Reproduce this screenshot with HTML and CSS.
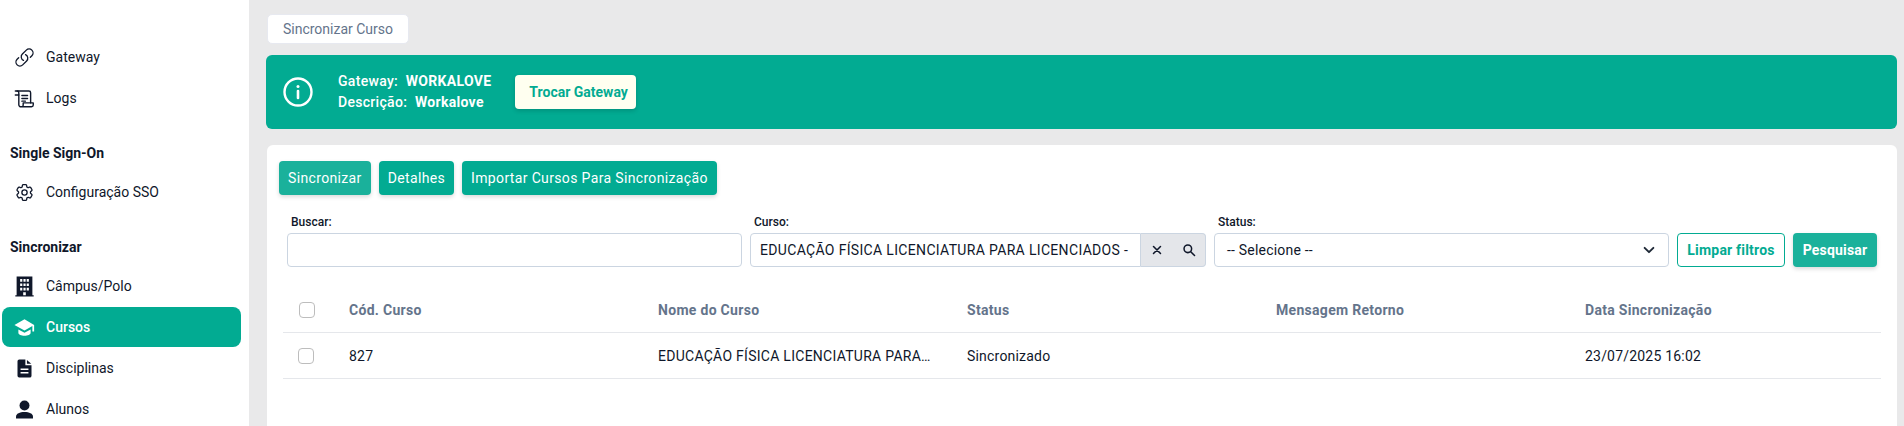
FILE: index.html
```html
<!DOCTYPE html>
<html lang="pt-BR">
<head>
  <meta charset="UTF-8">
  <title>Sincronizar Curso</title>
  <link rel="stylesheet" href="styles.css">
</head>
<body>
  <aside class="sidebar">
    <a class="nav-item">
      <svg class="nav-icon" viewBox="0 0 24 24" fill="none" stroke="currentColor" stroke-width="1.5" stroke-linecap="round" stroke-linejoin="round"><path d="M13.19 8.688a4.5 4.5 0 0 1 1.242 7.244l-4.5 4.5a4.5 4.5 0 0 1-6.364-6.364l1.757-1.757m13.35-.622 1.757-1.757a4.5 4.5 0 0 0-6.364-6.364l-4.5 4.5a4.5 4.5 0 0 0 1.242 7.244"/></svg>
      Gateway
    </a>
    <a class="nav-item">
      <svg class="nav-icon" viewBox="0 0 24 24" fill="none" stroke="currentColor" stroke-width="1.6" stroke-linecap="round" stroke-linejoin="round"><path d="M1.500 3.500H17a2 2 0 0 1 2 2V17"/><path d="M3.500 3.500a2 2 0 0 1 2 2v2.500h-4"/><path d="M5.500 8v11a2.500 2.500 0 0 0 2.500 2.500h12a2 2 0 0 0 2-2V17H10.500v2.500a2 2 0 0 1-2.500 2"/><path d="M9 8.500h6.500M9 12h6.500M9 15h4"/></svg>
      Logs
    </a>
    <h4 class="nav-title">Single Sign-On</h4>
    <a class="nav-item">
      <svg class="nav-icon" viewBox="0 0 24 24" fill="none" stroke="currentColor" stroke-width="1.5" stroke-linecap="round" stroke-linejoin="round"><path d="M9.594 3.940c.09-.542.56-.94 1.110-.94h2.593c.55 0 1.020.398 1.110.94l.213 1.281c.063.374.313.686.645.870.074.040.147.083.220.127.325.196.72.257 1.075.124l1.217-.456a1.125 1.125 0 0 1 1.370.49l1.296 2.247a1.125 1.125 0 0 1-.26 1.431l-1.003.827c-.293.241-.438.613-.43.992a7.723 7.723 0 0 1 0 .255c-.008.378.137.75.43.991l1.004.827c.424.35.534.955.26 1.430l-1.298 2.247a1.125 1.125 0 0 1-1.369.491l-1.217-.456c-.355-.133-.75-.072-1.076.124a6.470 6.470 0 0 1-.22.128c-.331.183-.581.495-.644.869l-.213 1.281c-.09.543-.56.94-1.110.94h-2.594c-.55 0-1.019-.398-1.110-.94l-.213-1.281c-.062-.374-.312-.686-.644-.87a6.520 6.520 0 0 1-.22-.127c-.325-.196-.72-.257-1.076-.124l-1.217.456a1.125 1.125 0 0 1-1.369-.49l-1.297-2.247a1.125 1.125 0 0 1 .26-1.431l1.004-.827c.292-.24.437-.613.43-.991a6.932 6.932 0 0 1 0-.255c.007-.38-.138-.751-.43-.992l-1.004-.827a1.125 1.125 0 0 1-.26-1.430l1.297-2.247a1.125 1.125 0 0 1 1.370-.491l1.216.456c.356.133.751.072 1.076-.124.072-.044.146-.086.22-.128.332-.183.582-.495.644-.869l.214-1.280Z"/><path d="M15 12a3 3 0 1 1-6 0 3 3 0 0 1 6 0Z"/></svg>
      Configuração SSO
    </a>
    <h4 class="nav-title">Sincronizar</h4>
    <a class="nav-item">
      <svg class="nav-icon" viewBox="0 0 24 24" fill="currentColor"><path fill-rule="evenodd" d="M3 .5h18v21.500h1.500v1.500h-21V22H3zM7 3.500v3h2.500v-3zm3.800 0v3h2.500v-3zm3.700 0v3H17v-3zM7 8.500v3h2.500v-3zm3.800 0v3h2.500v-3zm3.700 0v3H17v-3zM7 13.500v3h2.500v-3zm3.800 0v3h2.500v-3zm3.700 0v3H17v-3zM10.500 18.500V22h3v-3.500z"/></svg>
      Câmpus/Polo
    </a>
    <a class="nav-item active">
      <svg class="nav-icon" viewBox="0 0 24 24" fill="currentColor"><path d="M12 2.500.5 9 12 15.500 21 10.400V16.500h2V9z"/><path d="M5 14.200V18c0 2 3.200 3.500 7 3.500s7-1.500 7-3.500v-3.800l-7 3.900z"/></svg>
      Cursos
    </a>
    <a class="nav-item">
      <svg class="nav-icon" viewBox="0 0 24 24" fill="currentColor"><path fill-rule="evenodd" d="M6 1.700h7v6.500h7v12a2.100 2.100 0 0 1-2.100 2.100H6a2.100 2.100 0 0 1-2-2.100V3.800a2.100 2.100 0 0 1 2-2.100zM7.500 12v1.800h9V12zm0 4v1.800h9V16z"/><path d="M14.800 2.200 19.700 6.600h-4.900z"/></svg>
      Disciplinas
    </a>
    <a class="nav-item">
      <svg class="nav-icon" viewBox="0 0 24 24" fill="currentColor"><circle cx="12" cy="7.400" r="5.700"/><path d="M2.300 22.300v-2c0-3.600 4.300-5.400 9.700-5.400s9.700 1.800 9.700 5.400v2z"/></svg>
      Alunos
    </a>
  </aside>

  <main class="content">
    <div class="breadcrumb">Sincronizar Curso</div>

    <section class="alert">
      <svg class="alert-icon" viewBox="0 0 30 30" fill="none" stroke="currentColor" stroke-width="2.400"><circle cx="15" cy="15" r="13.500"/><path d="M15 14v7" stroke-linecap="round" stroke-width="2.600"/><circle cx="15" cy="9.500" r="1.500" fill="currentColor" stroke="none"/></svg>
      <div class="alert-text">
        <div>Gateway: <b>WORKALOVE</b></div>
        <div>Descrição: <b>Workalove</b></div>
      </div>
      <button class="btn-light">Trocar Gateway</button>
    </section>

    <section class="card">
      <div class="actions">
        <button class="btn btn-soft">Sincronizar</button>
        <button class="btn">Detalhes</button>
        <button class="btn">Importar Cursos Para Sincronização</button>
      </div>

      <div class="filters">
        <div class="field field-search">
          <label>Buscar:</label>
          <input class="input" type="text">
        </div>
        <div class="field field-course">
          <label>Curso:</label>
          <div class="input-group">
            <div class="input-value">EDUCAÇÃO FÍSICA LICENCIATURA PARA LICENCIADOS -</div>
            <div class="input-addon">
              <svg viewBox="0 0 24 24" fill="none" stroke="currentColor" stroke-width="2.600" stroke-linecap="round"><path d="M6 6l12 12M18 6 6 18"/></svg>
              <svg viewBox="0 0 24 24" fill="none" stroke="currentColor" stroke-width="2.600" stroke-linecap="round"><circle cx="10" cy="10" r="6.500"/><path d="m15 15 6.500 6.500"/></svg>
            </div>
          </div>
        </div>
        <div class="field field-status">
          <label>Status:</label>
          <div class="select">
            <span>-- Selecione --</span>
            <svg viewBox="0 0 16 16" fill="none" stroke="currentColor" stroke-width="2.200" stroke-linecap="round" stroke-linejoin="round"><path d="m3 5.500 5 5 5-5"/></svg>
          </div>
        </div>
        <button class="btn-outline">Limpar filtros</button>
        <button class="btn btn-soft btn-search">Pesquisar</button>
      </div>

      <div class="table">
        <div class="row row-head">
          <div class="cell-check"><span class="checkbox"></span></div>
          <div>Cód. Curso</div>
          <div>Nome do Curso</div>
          <div>Status</div>
          <div>Mensagem Retorno</div>
          <div>Data Sincronização</div>
        </div>
        <div class="row">
          <div class="cell-check cell-check-body"><span class="checkbox"></span></div>
          <div>827</div>
          <div class="course-name">EDUCAÇÃO FÍSICA LICENCIATURA PARA…</div>
          <div>Sincronizado</div>
          <div></div>
          <div>23/07/2025 16:02</div>
        </div>
      </div>
    </section>
  </main>
</body>
</html>
```

FILE: styles.css
```css
* {
  box-sizing: border-box;
}
body {
  margin: 0;
  height: 426px;
  overflow: hidden;
  display: flex;
  font-family: Roboto, "Liberation Sans", sans-serif;
  font-size: 14px;
  color: #0f172a;
  background-color: #e9e9ea;
}

/* sidebar */
.sidebar {
  width: 249px;
  flex-shrink: 0;
  background-color: #fff;
  padding: 37px 8px 0 2px;
}
.nav-item {
  display: flex;
  align-items: center;
  height: 40px;
  margin-bottom: 1px;
  padding-left: 12px;
  gap: 11px;
  border-radius: 8px;
  white-space: nowrap;
}
.nav-item.active {
  background-color: #02ab92;
  color: #fff;
  font-weight: 500;
}
.nav-icon {
  width: 21px;
  height: 21px;
  flex-shrink: 0;
}
.nav-title {
  margin: 0;
  padding: 24px 0 0 8px;
  height: 53px;
  font-size: 14px;
  font-weight: 700;
  line-height: 20px;
}

/* main */
.content {
  flex: 1;
  min-width: 0;
  padding: 14px 7px 0 17px;
}
.breadcrumb {
  width: 142px;
  height: 30px;
  margin-left: 1px;
  background-color: #fff;
  border: 1px solid #e7e9f0;
  border-radius: 5px;
  color: #64748b;
  font-size: 14px;
  line-height: 28px;
  text-align: center;
}
.alert {
  display: flex;
  align-items: center;
  height: 74px;
  margin-top: 11px;
  padding-left: 17px;
  background-color: #02ab92;
  border-radius: 6px;
  color: #fff;
  font-weight: 500;
}
.alert-icon {
  width: 30px;
  height: 30px;
  flex-shrink: 0;
}
.alert-text {
  margin-left: 25px;
  line-height: 21px;
  letter-spacing: 0.3px;
  white-space: nowrap;
}
.alert-text b {
  margin-left: 4px;
  font-weight: 700;
}
.btn-light {
  width: 121px;
  height: 34px;
  margin-left: 24px;
  padding: 0 9px 0 14px;
  border: none;
  border-radius: 4px;
  background-color: #fffff0;
  color: #02ab92;
  font: 700 14px Roboto, sans-serif;
  white-space: nowrap;
  box-shadow: 0 2px 4px rgba(0, 0, 0, 0.15);
}

.card {
  height: 300px;
  margin: 16px 0 0 1px;
  padding: 16px 12px 0 12px;
  background-color: #fff;
  border-radius: 6px 6px 0 0;
}
.actions {
  display: flex;
  gap: 8px;
}
.btn {
  height: 34px;
  padding: 0 9px;
  border: none;
  border-radius: 4px;
  background-color: #02ab92;
  color: #fff;
  font: 400 14px Roboto, sans-serif;
  letter-spacing: 0.35px;
  box-shadow: 0 2px 4px rgba(0, 0, 0, 0.15);
}
.btn-soft {
  background-color: #1ab19b;
}

/* filters */
.filters {
  display: flex;
  align-items: flex-end;
  gap: 8px;
  margin: 20px 0 0 8px;
}
.field label {
  display: block;
  height: 18px;
  padding-left: 4px;
  font-size: 12px;
  font-weight: 500;
  line-height: 15px;
}
.field-search {
  width: 455px;
}
.field-course {
  width: 456px;
}
.field-status {
  width: 455px;
}
.input, .select, .input-value {
  height: 34px;
  border: 1px solid #cbd5e1;
  border-radius: 4px;
  background-color: #fff;
  color: #0f172a;
  font-family: inherit;
  font-size: 14px;
}
.input {
  display: block;
  width: 100%;
}
.input-group {
  display: flex;
}
.input-value {
  width: 391px;
  padding: 0 9px;
  border-radius: 4px 0 0 4px;
  line-height: 32px;
  letter-spacing: 0.33px;
  white-space: nowrap;
  overflow: hidden;
}
.input-addon {
  display: flex;
  align-items: center;
  justify-content: space-between;
  flex: 1;
  padding: 0 9px;
  background-color: #e4e6ea;
  border: 1px solid #cbd5e1;
  border-left: none;
  border-radius: 0 4px 4px 0;
}
.input-addon svg {
  width: 14px;
  height: 14px;
}
.select {
  display: flex;
  align-items: center;
  justify-content: space-between;
  padding: 0 12px;
  letter-spacing: 0.2px;
}
.select svg {
  width: 14px;
  height: 14px;
  color: #1f2937;
}
.btn-outline {
  width: 108px;
  height: 34px;
  padding: 0;
  border: 1px solid #02ab92;
  border-radius: 4px;
  background-color: #fff;
  color: #02ab92;
  font: 700 14px Roboto, sans-serif;
  letter-spacing: 0.2px;
}
.btn-search {
  width: 84px;
  padding: 0;
  font-weight: 700;
  letter-spacing: 0.2px;
}

/* table */
.table {
  margin: 21px 4px 0 4px;
}
.row {
  display: grid;
  grid-template-columns: 66px repeat(5, 309px);
  align-items: center;
  height: 46px;
  border-bottom: 1px solid #e5e7eb;
  letter-spacing: 0.2px;
}
.row-head {
  height: 45px;
  color: #64748b;
  font-weight: 700;
  letter-spacing: 0.3px;
}
.row > div {
  min-width: 0;
  white-space: nowrap;
}
.course-name {
  letter-spacing: 0.27px;
}
.cell-check {
  display: flex;
  padding-left: 16px;
}
.cell-check-body {
  padding-left: 15px;
}
.checkbox {
  width: 16px;
  height: 16px;
  border: 1px solid #bdbdbd;
  border-radius: 4px;
  background-color: #fff;
}
```
